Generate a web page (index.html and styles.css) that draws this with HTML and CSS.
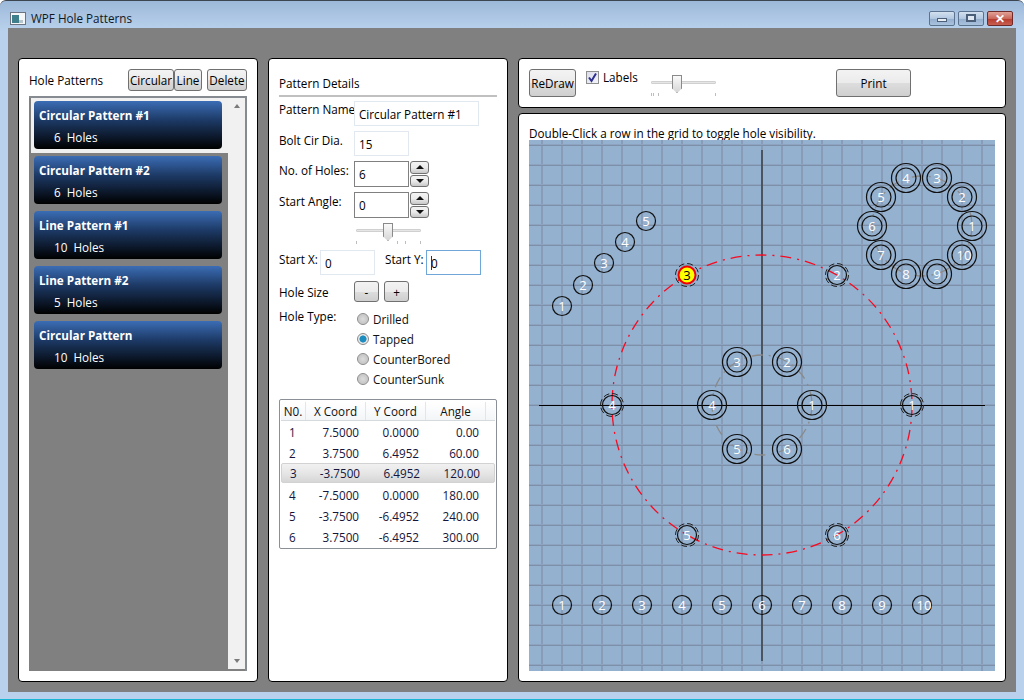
FILE: index.html
```html
<!DOCTYPE html>
<html lang="en">
    <head>
        <meta charset="UTF-8">
        <title>WPF Hole Patterns</title>
        <link rel="stylesheet" href="styles.css">
    </head>
    <body>
        <div class="window">
            <div class="titlebar">
                <svg class="app-icon" width="16" height="13" viewBox="0 0 16 13">
                    <rect x="0.5" y="0.5" width="15" height="12" fill="#f4f6f8" stroke="#6b7480"/>
                    <rect x="2" y="3" width="7" height="8" fill="#3f7f8c"/>
                    <rect x="9" y="8" width="4" height="3" fill="#b8c4cc"/>
                </svg>
                <span class="title-text">WPF Hole Patterns</span>
                <div class="win-buttons">
                    <div class="win-btn"><span class="glyph-min"></span></div>
                    <div class="win-btn"><span class="glyph-max"></span></div>
                    <div class="win-btn win-close"><span class="glyph-close">&#10005;</span></div>
                </div>
            </div>

            <div class="client">
                <!-- pattern list -->
                <section class="panel list-panel">
                    <div class="list-head">
                        <span class="list-title">Hole Patterns</span>
                        <button class="btn btn-circular">Circular</button>
                        <button class="btn btn-line">Line</button>
                        <button class="btn btn-delete">Delete</button>
                    </div>
                    <div class="listbox">
                        <div class="list-items">
                            <div class="list-row selected">
                                <div class="pattern-item"><b>Circular Pattern #1</b><span>6&nbsp; Holes</span></div>
                            </div>
                            <div class="list-row">
                                <div class="pattern-item"><b>Circular Pattern #2</b><span>6&nbsp; Holes</span></div>
                            </div>
                            <div class="list-row">
                                <div class="pattern-item"><b>Line Pattern #1</b><span>10&nbsp; Holes</span></div>
                            </div>
                            <div class="list-row">
                                <div class="pattern-item"><b>Line Pattern #2</b><span>5&nbsp; Holes</span></div>
                            </div>
                            <div class="list-row">
                                <div class="pattern-item"><b>Circular Pattern</b><span>10&nbsp; Holes</span></div>
                            </div>
                        </div>
                        <div class="scrollbar">
                            <span class="arrow-up"></span>
                            <span class="arrow-down"></span>
                        </div>
                    </div>
                </section>

                <!-- pattern details -->
                <section class="panel details-panel">
                    <div class="details-title">Pattern Details</div>
                    <div class="form-row row-name">
                        <label class="field-label">Pattern Name</label>
                        <div class="input input-wide">Circular Pattern #1</div>
                    </div>
                    <div class="form-row row-dia">
                        <label class="field-label">Bolt Cir Dia.</label>
                        <div class="input">15</div>
                    </div>
                    <div class="form-row row-holes">
                        <label class="field-label">No. of Holes:</label>
                        <div class="input input-dark">6</div>
                        <div class="spinner">
                            <div class="spin-btn"><span class="arrow-up dark"></span></div>
                            <div class="spin-btn"><span class="arrow-down dark"></span></div>
                        </div>
                    </div>
                    <div class="form-row row-angle">
                        <label class="field-label">Start Angle:</label>
                        <div class="input input-dark">0</div>
                        <div class="spinner">
                            <div class="spin-btn"><span class="arrow-up dark"></span></div>
                            <div class="spin-btn"><span class="arrow-down dark"></span></div>
                        </div>
                    </div>
                    <div class="slider angle-slider">
                        <div class="slider-track"></div>
                        <div class="slider-thumb"></div>
                        <div class="slider-ticks"><i></i><i></i><i></i><i></i></div>
                    </div>
                    <div class="form-row row-start">
                        <label class="label-x">Start X:</label>
                        <div class="input">0</div>
                        <label class="label-y">Start Y:</label>
                        <div class="input input-focus"><span class="caret"></span>0</div>
                    </div>
                    <div class="form-row row-size">
                        <label class="field-label">Hole Size</label>
                        <button class="btn btn-size">-</button>
                        <button class="btn btn-size">+</button>
                    </div>
                    <div class="form-row row-type">
                        <label class="field-label type-label">Hole Type:</label>
                        <div class="radio-list">
                            <div class="radio-item"><span class="radio"></span>Drilled</div>
                            <div class="radio-item"><span class="radio checked"></span>Tapped</div>
                            <div class="radio-item"><span class="radio"></span>CounterBored</div>
                            <div class="radio-item"><span class="radio"></span>CounterSunk</div>
                        </div>
                    </div>
                    <div class="datagrid">
                        <div class="grid-row grid-head">
                            <span>N0.</span><span>X Coord</span><span>Y Coord</span><span>Angle</span><span></span>
                        </div>
                        <div class="grid-row"><span>1</span><span>7.5000</span><span>0.0000</span><span>0.00</span></div>
                        <div class="grid-row"><span>2</span><span>3.7500</span><span>6.4952</span><span>60.00</span></div>
                        <div class="grid-row grid-selected"><span>3</span><span>-3.7500</span><span>6.4952</span><span>120.00</span></div>
                        <div class="grid-row"><span>4</span><span>-7.5000</span><span>0.0000</span><span>180.00</span></div>
                        <div class="grid-row"><span>5</span><span>-3.7500</span><span>-6.4952</span><span>240.00</span></div>
                        <div class="grid-row"><span>6</span><span>3.7500</span><span>-6.4952</span><span>300.00</span></div>
                    </div>
                </section>

                <div class="right-col">
                    <section class="panel toolbar">
                        <button class="btn btn-redraw">ReDraw</button>
                        <label class="check-label"><span class="checkbox"><svg width="11" height="11" viewBox="0 0 11 11"><path d="M2 5.5 L4.5 9 L9 1.5" fill="none" stroke="#2b2f8f" stroke-width="2"/></svg></span>Labels</label>
                        <div class="slider zoom-slider">
                            <div class="slider-track"></div>
                            <div class="slider-thumb"></div>
                            <div class="slider-ticks"><i></i><i></i><i></i><i></i></div>
                        </div>
                        <button class="btn btn-print">Print</button>
                    </section>

                    <section class="panel canvas-panel">
                        <div class="hint">Double-Click a row in the grid to toggle hole visibility.</div>
                        <!-- drawing uses window coordinates, so the viewBox starts at the canvas corner -->
                        <svg class="canvas" width="466" height="531" viewBox="529 140 466 531">
                            <defs>
                                <pattern id="gridV" x="541" y="0" width="20" height="20" patternUnits="userSpaceOnUse">
                                    <rect width="2" height="20" fill="#889cb8"/>
                                </pattern>
                                <pattern id="gridH" x="0" y="144" width="20" height="20" patternUnits="userSpaceOnUse">
                                    <rect width="20" height="1" y="0" fill="#8da3bf"/>
                                    <rect width="20" height="1" y="1" fill="#7d90aa"/>
                                </pattern>
                            </defs>
                            <rect x="529" y="140" width="466" height="531" fill="#94b1d0"/>
                            <rect x="529" y="140" width="466" height="531" fill="url(#gridV)"/>
                            <rect x="529" y="140" width="466" height="531" fill="url(#gridH)"/>

                            <line class="axis-v" x1="762" y1="150" x2="762" y2="661"/>
                            <line class="axis-h" x1="539" y1="405.5" x2="985" y2="405.5"/>

                            <circle class="bolt-circle" cx="762" cy="405" r="150"/>
                            <circle class="inner-circle" cx="762" cy="405" r="50"/>
                            <circle class="inner-circle" cx="922" cy="226" r="50"/>

                            <!-- tapped circular pattern -->
                            <g class="hole">
                                <circle cx="912" cy="405" r="9.5"/><circle class="dash" cx="912" cy="405" r="11.5"/><text x="912" y="410">1</text>
                                <circle cx="837" cy="275" r="9.5"/><circle class="dash" cx="837" cy="275" r="11.5"/><text x="837" y="280">2</text>
                                <circle cx="612" cy="405" r="9.5"/><circle class="dash" cx="612" cy="405" r="11.5"/><text x="612" y="410">4</text>
                                <circle cx="687" cy="535" r="9.5"/><circle class="dash" cx="687" cy="535" r="11.5"/><text x="687" y="540">5</text>
                                <circle cx="837" cy="535" r="9.5"/><circle class="dash" cx="837" cy="535" r="11.5"/><text x="837" y="540">6</text>
                            </g>
                            <g class="hole hole-selected">
                                <circle class="dash" cx="687" cy="275" r="11.5"/>
                                <circle class="sel" cx="687" cy="275" r="8.5"/>
                                <text x="687" y="280">3</text>
                            </g>

                            <!-- counterbored circular pattern -->
                            <g class="hole">
                                <circle cx="812" cy="405" r="14.5"/><circle cx="812" cy="405" r="10"/><text x="812" y="410">1</text>
                                <circle cx="787" cy="362" r="14.5"/><circle cx="787" cy="362" r="10"/><text x="787" y="367">2</text>
                                <circle cx="737" cy="362" r="14.5"/><circle cx="737" cy="362" r="10"/><text x="737" y="367">3</text>
                                <circle cx="712" cy="405" r="14.5"/><circle cx="712" cy="405" r="10"/><text x="712" y="410">4</text>
                                <circle cx="737" cy="449" r="14.5"/><circle cx="737" cy="449" r="10"/><text x="737" y="454">5</text>
                                <circle cx="787" cy="449" r="14.5"/><circle cx="787" cy="449" r="10"/><text x="787" y="454">6</text>
                            </g>

                            <!-- ten hole ring -->
                            <g class="hole">
                                <circle cx="972" cy="226" r="14.5"/><circle cx="972" cy="226" r="10"/><text x="972" y="231">1</text>
                                <circle cx="962" cy="197" r="14.5"/><circle cx="962" cy="197" r="10"/><text x="962" y="202">2</text>
                                <circle cx="937" cy="178" r="14.5"/><circle cx="937" cy="178" r="10"/><text x="937" y="183">3</text>
                                <circle cx="906" cy="178" r="14.5"/><circle cx="906" cy="178" r="10"/><text x="906" y="183">4</text>
                                <circle cx="881" cy="197" r="14.5"/><circle cx="881" cy="197" r="10"/><text x="881" y="202">5</text>
                                <circle cx="872" cy="226" r="14.5"/><circle cx="872" cy="226" r="10"/><text x="872" y="231">6</text>
                                <circle cx="881" cy="255" r="14.5"/><circle cx="881" cy="255" r="10"/><text x="881" y="260">7</text>
                                <circle cx="906" cy="274" r="14.5"/><circle cx="906" cy="274" r="10"/><text x="906" y="279">8</text>
                                <circle cx="937" cy="274" r="14.5"/><circle cx="937" cy="274" r="10"/><text x="937" y="279">9</text>
                                <circle cx="962" cy="255" r="14.5"/><circle cx="962" cy="255" r="10"/><text x="964" y="260">10</text>
                            </g>

                            <!-- diagonal line -->
                            <g class="hole">
                                <circle cx="562" cy="306" r="9.5"/><text x="562" y="311">1</text>
                                <circle cx="583" cy="285" r="9.5"/><text x="583" y="290">2</text>
                                <circle cx="604" cy="263" r="9.5"/><text x="604" y="268">3</text>
                                <circle cx="625" cy="242" r="9.5"/><text x="625" y="247">4</text>
                                <circle cx="646" cy="221" r="9.5"/><text x="646" y="226">5</text>
                            </g>

                            <!-- horizontal line -->
                            <g class="hole">
                                <circle cx="562" cy="605" r="9.5"/><text x="562" y="610">1</text>
                                <circle cx="602" cy="605" r="9.5"/><text x="602" y="610">2</text>
                                <circle cx="642" cy="605" r="9.5"/><text x="642" y="610">3</text>
                                <circle cx="682" cy="605" r="9.5"/><text x="682" y="610">4</text>
                                <circle cx="722" cy="605" r="9.5"/><text x="722" y="610">5</text>
                                <circle cx="762" cy="605" r="9.5"/><text x="762" y="610">6</text>
                                <circle cx="802" cy="605" r="9.5"/><text x="802" y="610">7</text>
                                <circle cx="842" cy="605" r="9.5"/><text x="842" y="610">8</text>
                                <circle cx="882" cy="605" r="9.5"/><text x="882" y="610">9</text>
                                <circle cx="922" cy="605" r="9.5"/><text x="924" y="610">10</text>
                            </g>
                        </svg>
                    </section>
                </div>
            </div>
        </div>
    </body>
</html>
```

FILE: styles.css
```css
* {
    box-sizing: border-box;
}

html, body {
    margin: 0;
    padding: 0;
}

body {
    font-family: "Open Sans", "Noto Sans", sans-serif;
    font-size: 11.7px;
    color: #000;
    width: 1024px;
    height: 700px;
    overflow: hidden;
}

.window {
    width: 1024px;
    height: 700px;
    display: flex;
    flex-direction: column;
    padding: 0 8px 7px;
    background: linear-gradient(180deg, #9db9d9 0, #b9d1ec 30px, #b9d1ec 100%);
    border-top: 1px solid #3c4650;
    border-bottom: 1px solid #19b5d5;
    border-radius: 6px 6px 0 0;
}

.titlebar {
    height: 27px;
    display: flex;
    align-items: center;
    flex-shrink: 0;
    padding-top: 7px;
}

.app-icon {
    margin: 0 5px 0 2px;
}

.title-text {
    color: #10181f;
}

.win-buttons {
    margin-left: auto;
    display: flex;
    gap: 3px;
    margin-right: 3px;
}

.win-btn {
    width: 26px;
    height: 15px;
    border: 1px solid #5c7390;
    border-radius: 2px;
    background: linear-gradient(180deg, #d3e0ef 0, #b2c8e0 50%, #93aecd 52%, #a9c2de 100%);
    display: flex;
    align-items: center;
    justify-content: center;
}

.win-close {
    border-color: #6f2a2a;
    background: linear-gradient(180deg, #e2a297 0, #c9685b 50%, #b53a2c 52%, #c85f52 100%);
}

.glyph-min {
    width: 10px;
    height: 4px;
    margin-top: 4px;
    background: #e6edf5;
    border: 1px solid #4c5f78;
}

.glyph-max {
    width: 10px;
    height: 8px;
    border: 2px solid #4c5f78;
    background: #dfe8f2;
}

.glyph-close {
    color: #fff;
    font-size: 12px;
    line-height: 13px;
    font-weight: bold;
}

.client {
    flex: 1;
    background-color: #808080;
    padding: 30px 10px 10px;
    display: flex;
    gap: 10px;
    min-height: 0;
}

.panel {
    background-color: #fff;
    border: 1px solid #000;
    border-radius: 4px;
}

.btn {
    font-family: inherit;
    font-size: 11.7px;
    color: #000;
    padding: 0;
    border: 1px solid #707070;
    border-radius: 3px;
    background: linear-gradient(180deg, #f3f3f3 0, #ebebeb 50%, #dddddd 51%, #cfcfcf 100%);
}

/* list panel */
.list-panel {
    width: 240px;
    padding: 10px;
    display: flex;
    flex-direction: column;
}

.list-head {
    display: flex;
    align-items: center;
    height: 22px;
    margin-bottom: 5px;
}

.list-title {
    width: 99px;
}

.btn-circular {
    width: 46px;
    height: 22px;
}

.btn-line {
    width: 28px;
    height: 22px;
}

.btn-delete {
    width: 40px;
    height: 22px;
    margin-left: 5px;
}

.listbox {
    flex: 1;
    display: flex;
    justify-content: space-between;
    background-color: #808080;
    border: 2px solid #868b92;
    border-left-width: 0;
    border-bottom-width: 0;
}

.list-items {
    width: 199px;
}

.list-row {
    padding: 3px 6px 4px 5px;
    height: 55px;
}

.list-row.selected {
    background-color: #f0f0f0;
    margin-left: 2px;
    padding-left: 3px;
}

.pattern-item {
    height: 48px;
    width: 188px;
    border-radius: 4px;
    background: linear-gradient(180deg, #3b6db5 0, #1d3a66 40%, #000 100%);
    color: #fff;
    display: flex;
    flex-direction: column;
    padding: 6px 5px;
    line-height: 16px;
}

.pattern-item b {
    font-weight: 700;
}

.pattern-item span {
    margin: 6px 0 0 15px;
}

.scrollbar {
    width: 17px;
    background-color: #f1f1f1;
    margin-bottom: 2px;
    display: flex;
    flex-direction: column;
    align-items: center;
    justify-content: space-between;
    padding: 6px 0;
}

.arrow-up,
.arrow-down {
    width: 0;
    height: 0;
    border-left: 3.5px solid transparent;
    border-right: 3.5px solid transparent;
}

.arrow-up {
    border-bottom: 4px solid #7a7a7a;
}

.arrow-down {
    border-top: 4px solid #7a7a7a;
}

.arrow-up.dark {
    border-left-width: 4px;
    border-right-width: 4px;
    border-bottom-color: #111;
}

.arrow-down.dark {
    border-left-width: 4px;
    border-right-width: 4px;
    border-top-color: #111;
}

/* details panel */
.details-panel {
    width: 240px;
    padding: 0 10px;
    display: flex;
    flex-direction: column;
}

.details-title {
    height: 38px;
    padding-top: 16px;
    line-height: 17px;
    border-bottom: 2px solid #c0c0c0;
}

.form-row {
    display: flex;
    align-items: flex-start;
}

.field-label {
    width: 75px;
    line-height: 18px;
    white-space: nowrap;
}

.row-name .field-label {
    line-height: 16px;
}

.input {
    width: 55px;
    height: 25px;
    border: 1px solid #e2e8ef;
    padding: 0 4px;
    line-height: 24px;
    position: relative;
}

.input-wide {
    width: 125px;
}

.input-dark {
    height: 26px;
    border-color: #808080;
}

.input-focus {
    border-color: #6fa8d8;
}

.caret {
    position: absolute;
    left: 4px;
    top: 5px;
    width: 1px;
    height: 14px;
    background: #333;
}

.row-name {
    margin-top: 4px;
}

.row-dia {
    margin-top: 5px;
}

.row-holes {
    margin-top: 5px;
}

.row-angle {
    margin-top: 5px;
}

.spinner {
    margin-left: 1px;
    width: 19px;
    height: 26px;
    display: flex;
    flex-direction: column;
    gap: 1px;
}

.spin-btn {
    flex: 1;
    border: 1px solid #707070;
    border-radius: 3px;
    background: linear-gradient(180deg, #f3f3f3 0, #ebebeb 50%, #c8c8c8 100%);
    display: flex;
    align-items: center;
    justify-content: center;
}

.slider {
    position: relative;
    height: 22px;
}

.slider-track {
    position: absolute;
    left: 0;
    right: 0;
    top: 6px;
    height: 3px;
    background: #e6e6e6;
    border: 1px solid #d0d0d0;
    border-radius: 1px;
}

.slider-thumb {
    position: absolute;
    top: 0;
    width: 10px;
    height: 18px;
    border: 1px solid #8a8a8a;
    background: linear-gradient(180deg, #fafafa, #d6d6d6);
    clip-path: polygon(0 0, 100% 0, 100% 75%, 50% 100%, 0 75%);
}

.slider-ticks {
    position: absolute;
    left: 0;
    right: 0;
    top: 18px;
    height: 3px;
    display: flex;
}

.slider-ticks i {
    width: 1px;
    height: 3px;
    background: #bdbdbd;
}

.angle-slider {
    width: 65px;
    margin: 5px 0 0 77px;
}

.angle-slider .slider-thumb {
    left: 27px;
}

.angle-slider i:nth-child(2) {
    margin-left: 40px;
}

.angle-slider i:nth-child(3) {
    margin-left: 7px;
}

.angle-slider i:nth-child(4) {
    margin-left: 15px;
}

.row-start {
    margin-top: 5px;
}

.label-x {
    width: 41px;
    line-height: 18px;
}

.label-y {
    width: 41px;
    margin-left: 10px;
    line-height: 18px;
}

.row-size {
    margin-top: 6px;
    height: 21px;
    align-items: center;
}

.btn-size {
    width: 25px;
    height: 21px;
    margin-right: 5px;
}

.row-type {
    margin-top: 5px;
}

.type-label {
    line-height: 16px;
    margin-top: 1px;
}

.radio-list {
    display: flex;
    flex-direction: column;
    margin-top: 2px;
}

.radio-item {
    display: flex;
    align-items: center;
    height: 20px;
    margin-left: 3px;
    color: #111;
}

.radio {
    width: 12px;
    height: 12px;
    border-radius: 50%;
    border: 1px solid #8a8a8a;
    background: radial-gradient(circle, #dcdcdc 0, #c8c8c8 60%, #f0f0f0 100%);
    margin-right: 4px;
}

.radio.checked {
    background: radial-gradient(circle, #1d8dc0 0, #1d8dc0 45%, #e8e8e8 55%);
}

.datagrid {
    margin-top: 10px;
    height: 150px;
    border: 1px solid #8a9096;
    border-radius: 2px;
    padding: 2px 1px 0;
}

.grid-row {
    display: grid;
    grid-template-columns: 25px 60px 60px 60px 1fr;
    height: 21px;
    line-height: 21px;
    color: #14143c;
}

.grid-row span {
    text-align: right;
    padding-right: 7px;
}

.grid-row span:first-child {
    text-align: left;
    padding: 0 0 0 8px;
}

.grid-selected {
    height: 20px;
    line-height: 19px;
    margin: -1px 0 2px;
    background: linear-gradient(180deg, #f1f1f1 0, #e6e6e6 50%, #d6d6d6 100%);
    border: 1px solid #d2d2d2;
    border-radius: 2px;
}

.grid-head {
    height: 19px;
    line-height: 18px;
    margin-bottom: 1px;
    border-bottom: 1px solid #d5dadf;
    background: linear-gradient(180deg, #fff 0, #f3f5f7 100%);
    color: #111;
}

.grid-head span {
    text-align: center;
    padding: 0;
    border-right: 1px solid #e3e6e9;
}

.grid-head span:first-child {
    text-align: center;
    padding: 0;
}

.grid-head span:last-child {
    border-right: 0;
}

/* right column */
.right-col {
    width: 488px;
    display: flex;
    flex-direction: column;
    gap: 5px;
}

.toolbar {
    height: 50px;
    padding: 10px;
    display: flex;
    align-items: flex-start;
}

.btn-redraw {
    width: 47px;
    height: 28px;
}

.check-label {
    display: flex;
    align-items: center;
    width: 50px;
    margin: 1px 0 0 10px;
    height: 14px;
}

.checkbox {
    width: 13px;
    height: 13px;
    border: 1px solid #8e8f8f;
    background: linear-gradient(135deg, #dcdcec, #f4f4fa);
    margin-right: 4px;
    display: flex;
    align-items: center;
    justify-content: center;
}

.zoom-slider {
    width: 65px;
    margin: 6px 0 0 15px;
}

.zoom-slider .slider-thumb {
    left: 21px;
}

.zoom-slider i:nth-child(2) {
    margin-left: 1px;
}

.zoom-slider i:nth-child(3) {
    margin-left: 4px;
}

.zoom-slider i:nth-child(4) {
    margin-left: 57px;
}

.btn-print {
    width: 75px;
    height: 28px;
    margin-left: 120px;
}

.canvas-panel {
    flex: 1;
    padding: 11px 10px 0;
}

.hint {
    height: 15px;
    line-height: 16px;
}

.canvas {
    display: block;
}

.canvas .axis-v {
    stroke: #4a5560;
    stroke-width: 2;
}

.canvas .axis-h {
    stroke: #000;
    stroke-width: 1;
}

.bolt-circle {
    fill: none;
    stroke: #f80a20;
    stroke-width: 1.3;
    stroke-dasharray: 11 6 2 6;
}

.inner-circle {
    fill: none;
    stroke: #8a8a8a;
    stroke-width: 1.3;
    stroke-dasharray: 11 6 2 6;
}

.hole circle {
    fill: none;
    stroke: #111;
    stroke-width: 1.2;
}

.hole circle.dash {
    stroke: #222;
    stroke-dasharray: 6 3;
    stroke-width: 1;
}

.hole text {
    fill: #fff;
    font-size: 13px;
    text-anchor: middle;
}

.hole-selected circle.sel {
    fill: #ffff00;
    stroke: #f00000;
    stroke-width: 2;
}

.hole-selected text {
    fill: #000;
}
```
